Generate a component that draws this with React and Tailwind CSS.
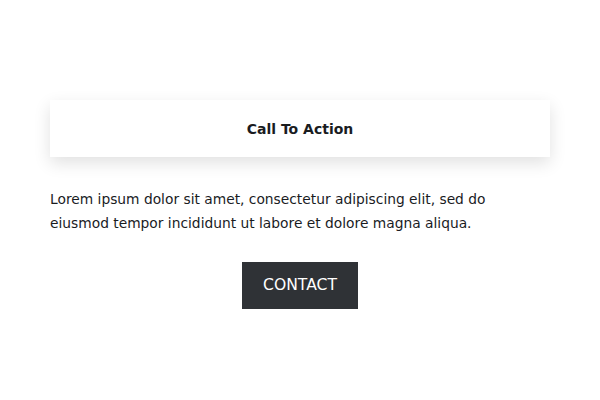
export default function App() {
  return (
    <div className="w-[600px] h-[400px] bg-white" style={{ fontFamily: '"DejaVu Sans", Verdana, sans-serif' }}>
      <div className="mx-[50px] pt-[100px] flex flex-col">
        <div className="h-[57px] bg-white flex items-center justify-center shadow-[0_6px_16px_rgba(0,0,0,0.12)]">
          <h2 className="text-[14px] font-bold text-[#1a1c1f] translate-y-[1px]">Call To Action</h2>
        </div>
        <p className="mt-[30px] max-w-[470px] text-[13.8px] leading-[24px] text-[#1a1c1f]">
          Lorem ipsum dolor sit amet, consectetur adipiscing elit, sed do eiusmod tempor incididunt ut labore et dolore magna aliqua.
        </p>
        <div className="mt-[27px] flex justify-center">
          <button className="w-[116px] h-[47px] bg-[#2f3236] text-white text-[15.6px]">CONTACT</button>
        </div>
      </div>
    </div>
  );
}
